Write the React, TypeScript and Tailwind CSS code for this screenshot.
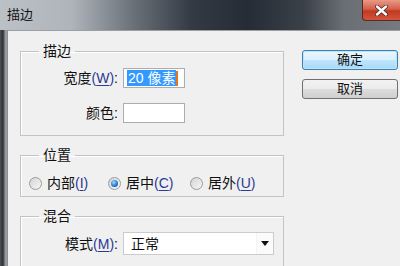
import type { ReactNode } from "react";

const FONT = { fontFamily: '"Liberation Sans", "Noto Sans CJK SC", sans-serif' };

function Key({ k }: { k: string }) {
  return (
    <span className="text-[#2b3a94]">
      (<span className="underline underline-offset-2">{k}</span>)
    </span>
  );
}

function Group({ title, className, children }: { title: string; className: string; children: ReactNode }) {
  return (
    <fieldset className={`border border-[#c3c3c3] shadow-[inset_1px_1px_0_#ffffff] ${className}`}>
      <legend className="ml-[18px] px-[4px] text-[14px] leading-[20px] text-[#111]">{title}</legend>
      {children}
    </fieldset>
  );
}

function Radio({ label, k, on, width }: { label: string; k: string; on?: boolean; width: string }) {
  return (
    <label className={`flex items-center ${width}`}>
      <span className="flex h-[13px] w-[13px] shrink-0 items-center justify-center rounded-full border border-[#9a9a9a] bg-[linear-gradient(135deg,#d4d4d4,#f7f7f7)]">
        {on && (
          <span className="h-[7px] w-[7px] rounded-full bg-[radial-gradient(circle_at_40%_35%,#a6d8ff,#1f74c8_60%,#0e4c92)]" />
        )}
      </span>
      <span className="ml-[5px] text-[14px] leading-[20px] text-[#111]">
        {label}
        <Key k={k} />
      </span>
    </label>
  );
}

export default function App() {
  return (
    <div className="flex h-[266px] w-[400px] flex-col overflow-hidden" style={FONT}>
      {/* title bar */}
      <div className="flex h-[30px] shrink-0 items-start justify-between bg-[linear-gradient(90deg,#bcc1c6_0%,#aeb4ba_18%,#6b727a_33%,#333a43_48%,#262c35_62%,#3b4149_76%,#6a6f75_86%,#76797d_100%)]">
        <span className="ml-[7px] mt-[6px] text-[13px] leading-[18px] text-[#151515]">描边</span>
        <div className="flex h-[21px] w-[38px] items-center justify-center rounded-bl-[4px] border-b border-l border-[#5a2a22] bg-[linear-gradient(180deg,#e99a88_0%,#d5604a_45%,#c03a22_55%,#d2553d_100%)]">
          <svg width="13" height="11" viewBox="0 0 13 11">
            <path d="M2 1.5 L11 9.5 M11 1.5 L2 9.5" stroke="#4a2a26" strokeWidth="4" strokeLinecap="round" />
            <path d="M2 1.5 L11 9.5 M11 1.5 L2 9.5" stroke="#ffffff" strokeWidth="2.4" strokeLinecap="round" />
          </svg>
        </div>
      </div>

      <div className="flex min-h-0 flex-1">
        {/* left frame */}
        <div className="w-[8px] shrink-0 border-r border-[#8b8f93] bg-[linear-gradient(90deg,#4f545a_0%,#2c3035_40%,#9a9ea2_80%)]" />

        {/* client */}
        <div className="flex flex-1 border-t border-[#9b9fa3] bg-[#f0f0f0]">
          <div className="ml-[12px] flex w-[264px] shrink-0 flex-col">
            <Group title="描边" className="mt-[10px] pb-[12px] pt-[7px]">
              <div className="flex items-center">
                <span className="w-[97px] text-right text-[14px] leading-[20px] text-[#111]">
                  宽度<Key k="W" />:
                </span>
                <div className="ml-[5px] flex h-[20px] w-[62px] items-center border border-[#abadb3] bg-white pl-[3px]">
                  <span className="bg-[#3399ff] px-[1px] text-[14px] leading-[16px] text-white">20 像素</span>
                  <span className="h-[15px] w-[2px] bg-[#e8731a]" />
                </div>
              </div>
              <div className="mt-[15px] flex items-center">
                <span className="w-[97px] text-right text-[14px] leading-[20px] text-[#111]">颜色:</span>
                <div className="ml-[5px] h-[20px] w-[62px] border border-[#abadb3] bg-white" />
              </div>
            </Group>

            <Group title="位置" className="mt-[9px] pb-[3px] pt-[8px]">
              <div className="flex pl-[8px]">
                <Radio label="内部" k="I" width="w-[79px]" />
                <Radio label="居中" k="C" on width="w-[82px]" />
                <Radio label="居外" k="U" width="w-[80px]" />
              </div>
            </Group>

            <Group title="混合" className="mt-[9px] pb-[20px] pt-[6px]">
              <div className="flex items-center">
                <span className="w-[97px] text-right text-[14px] leading-[20px] text-[#111]">
                  模式<Key k="M" />:
                </span>
                <div className="ml-[5px] flex h-[23px] w-[151px] items-center border border-[#c9cbd0] bg-white">
                  <span className="flex-1 pl-[7px] text-[14px] leading-[20px] text-[#111]">正常</span>
                  <span className="flex h-full w-[17px] items-center justify-center border-l border-[#f2f4f6] bg-[#fbfbfb]">
                    <svg width="8" height="5" viewBox="0 0 8 5">
                      <path d="M0 0 H8 L4 5 Z" fill="#111" />
                    </svg>
                  </span>
                </div>
              </div>
            </Group>
          </div>

          {/* buttons */}
          <div className="ml-[18px] mt-[19px] flex flex-col gap-[9px]">
            <button className="h-[20px] w-[96px] rounded-[3px] border border-[#3c7fb1] bg-[linear-gradient(180deg,#eaf6fd_0%,#d9f0fc_50%,#bee6fd_51%,#a7d9f5_100%)] text-[13px] leading-[16px] text-[#111] shadow-[inset_0_0_0_1px_#bfe4f8]">
              确定
            </button>
            <button className="h-[20px] w-[96px] rounded-[3px] border border-[#707070] bg-[linear-gradient(180deg,#f2f2f2_0%,#ebebeb_50%,#dddddd_51%,#cfcfcf_100%)] text-[13px] leading-[16px] text-[#111]">
              取消
            </button>
          </div>
        </div>
      </div>
    </div>
  );
}
